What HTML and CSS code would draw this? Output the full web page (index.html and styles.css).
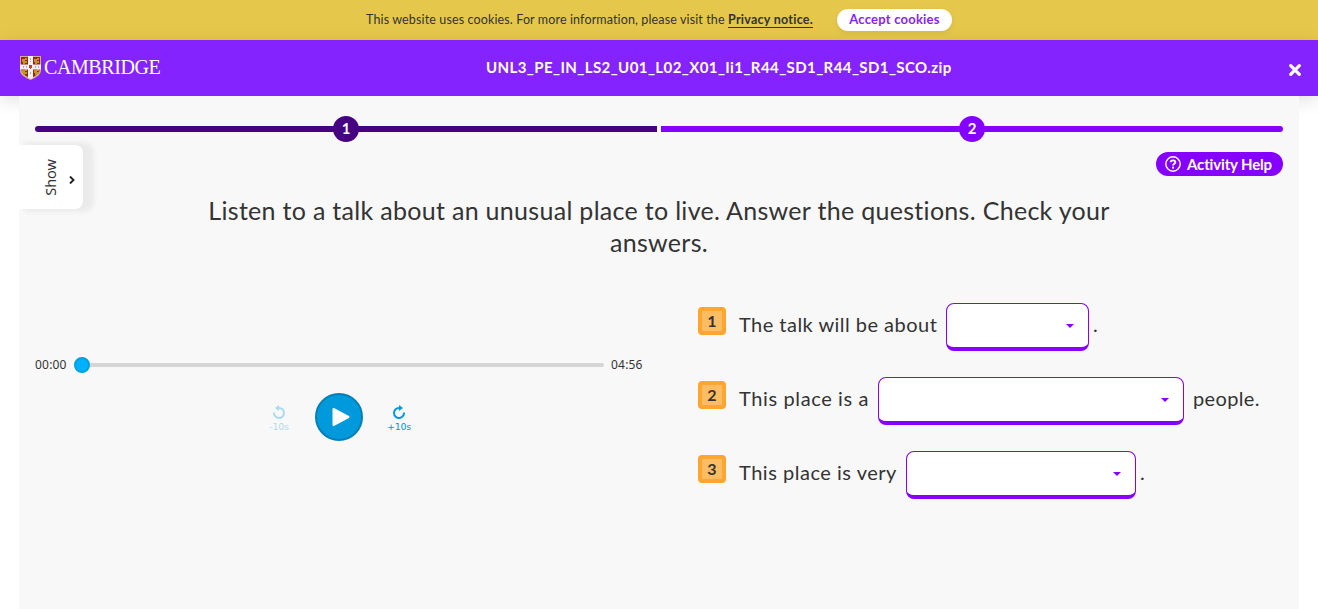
FILE: index.html
```html
<!DOCTYPE html>
<html lang="en">
<head>
<meta charset="utf-8">
<title>Cambridge activity</title>
<link rel="stylesheet" href="styles.css">
</head>
<body>
<div class="cookies">
  <p class="cookie-text">This website uses cookies. For more information, please visit the</p>
  <a class="privacy">Privacy notice.</a>
  <button class="accept"><span>Accept cookies</span></button>
</div>
<header class="header">
  <div class="brand">
    <svg class="shield" viewBox="0 0 21 24">
      <path d="M0 0H21V14C21 19 17 21 10.500 24C4 21 0 19 0 14Z" fill="#d5aa91"/>
      <path d="M1 1H8V9H1ZM13 1H20V9H13ZM1 13H8V21Q2 18 1 13ZM13 13H20Q19 18 13 21Z" fill="#95251b"/>
      <path d="M2 3H5V2H7V4H5V5H7V7H5V8H3V6H2ZM14 3H17V2H19V4H17V5H19V7H17V8H15V6H14ZM2 14H5V13H7V15H5V16H7V18H5V19H3V17H2ZM14 14H17V13H19V15H17V16H19V18H17V19H15V17H14Z" fill="#c4951e"/>
      <path d="M8 0H13V8.500H21V13.500H13V22L10.500 23L8 22V13.500H0V8.500H8Z" fill="#f4eeee"/>
      <path d="M9 9H12V12H11V13H10V12H9Z" fill="#c43c36"/>
      <path d="M10 2h1v2h-1zM10 5h1v1h-1zM10 16h1v2h-1zM3 10h1v2H3zM6 10h1v2H6zM15 10h1v2h-1zM18 10h1v2h-1z" fill="#aaa"/>
    </svg>
    <span class="brand-name">CAMBRIDGE</span>
  </div>
  <h1 class="title">UNL3_PE_IN_LS2_U01_L02_X01_Ii1_R44_SD1_R44_SD1_SCO.zip</h1>
  <svg class="close" viewBox="0 0 12 12"><path d="M1.700 1.700L10.300 10.300M10.300 1.700L1.700 10.300" stroke="#fff" stroke-width="3.200" stroke-linecap="round"/></svg>
</header>
<main class="page">
  <nav class="steps">
    <div class="step step-current"><span class="step-number">1</span></div>
    <div class="step step-next"><span class="step-number">2</span></div>
  </nav>
  <div class="tools">
    <button class="show"><span class="show-label">Show</span>
      <svg class="chevron" viewBox="0 0 6 8"><path d="M1 .500L4.500 4L1 7.500" fill="none" stroke="#222" stroke-width="1.900"/></svg>
    </button>
    <button class="help">
      <svg class="help-icon" viewBox="0 0 16 16" fill="none" stroke="#fff"><circle cx="8" cy="8" r="7.200" stroke-width="1.400"/><path d="M5.700 6.300C5.700 3.700 10.300 3.700 10.300 6.300C10.300 7.800 8 7.600 8 9.500" stroke-width="1.900"/><circle cx="8" cy="11.700" r="1.100" fill="#fff" stroke="none"/></svg>
      <span class="help-label">Activity Help</span>
    </button>
  </div>
  <h2 class="rubric">Listen to a talk about an unusual place to live. Answer the questions. Check your<br>answers.</h2>
  <div class="content">
    <section class="player">
      <div class="timeline"><span class="time">00:00</span><div class="track"><i class="knob"></i></div><span class="time time-end">04:56</span></div>
      <div class="controls">
        <button class="skip skip-off"><svg viewBox="0 0 14 14"><path d="M2 7.500A5 5 0 1 0 7 3H5" fill="none" stroke="currentColor" stroke-width="2"/><path d="M7 0V6L3 3Z" fill="currentColor"/></svg><span>-10s</span></button>
        <button class="play"><svg viewBox="0 0 18 20"><path d="M1.500 2V18L16.500 10Z" fill="#fff" stroke="#fff" stroke-width="2" stroke-linejoin="round"/></svg></button>
        <button class="skip"><svg viewBox="0 0 14 14"><path d="M12 7.500A5 5 0 1 1 7 3H9" fill="none" stroke="currentColor" stroke-width="2"/><path d="M7 0V6L11 3Z" fill="currentColor"/></svg><span>+10s</span></button>
      </div>
    </section>
    <section class="questions">
      <div class="question"><b class="number">1</b><span class="phrase phrase-about">The talk will be about</span><span class="select select-about"><i class="arrow"></i></span><span class="tail">.</span></div>
      <div class="question"><b class="number">2</b><span class="phrase phrase-people">This place is a</span><span class="select select-people"><i class="arrow"></i></span><span class="tail tail-word">people.</span></div>
      <div class="question"><b class="number">3</b><span class="phrase phrase-very">This place is very</span><span class="select select-very"><i class="arrow"></i></span><span class="tail">.</span></div>
    </section>
  </div>
</main>
</body>
</html>
```
FILE: styles.css
```css
* { box-sizing: border-box; }
body { margin: 0; height: 609px; overflow: hidden; background: #fff; color: #333; font-family: Lato, "Noto Sans", sans-serif; font-variant-ligatures: none; }
button { border: 0; padding: 0; font-family: inherit; }
p, h1, h2 { margin: 0; font-weight: 400; }
svg { display: block; flex: none; }
.cookies { height: 40px; background: #e5c84b; display: flex; align-items: center; padding: 0 0 1px 366px; white-space: nowrap; font-size: 12.500px; line-height: 15px; letter-spacing: .130px; }
.cookie-text { width: 362px; }
.privacy { width: 85px; margin-top: 1px; font-weight: 700; letter-spacing: .260px; border-bottom: 1px solid #333; }
.accept { margin: 1px 0 0 24px; padding-bottom: 2px; width: 115px; height: 22px; border-radius: 11px; background: #fff; color: #8523ff; font-size: 13px; font-weight: 700; letter-spacing: .220px; box-shadow: 0 2px 6px rgba(0,0,0,.08); }
.header { height: 56px; background: #8523ff; color: #fff; display: flex; align-items: center; padding: 0 17px 0 20px; box-shadow: 0 4px 18px rgba(0,0,0,.12); }
.brand { display: flex; align-items: center; width: 466px; }
.shield { width: 21px; height: 24px; }
.brand-name { margin: 0 0 2px 3px; font: 20px/24px "Liberation Serif", serif; letter-spacing: -.400px; white-space: nowrap; }
.title { width: 466px; margin-bottom: 2px; font-size: 15px; font-weight: 700; letter-spacing: .420px; white-space: nowrap; }
.close { width: 12px; height: 12px; margin: 4px 0 0 auto; }
.page { position: relative; margin: 0 19px; height: 513px; padding: 20px 16px 0; background: #f8f8f8; }
.steps { display: grid; grid-template-columns: 622px 622px; gap: 4px; height: 26px; }
.step { height: 6px; margin-top: 10px; display: flex; align-items: center; justify-content: center; }
.step-current { background: #460082; border-radius: 3px 0 0 3px; }
.step-next { background: #8500ff; border-radius: 0 3px 3px 0; }
.step-number { width: 26px; height: 26px; border-radius: 50%; color: #fff; font-size: 15px; font-weight: 700; line-height: 25px; text-align: center; flex: none; }
.step-current .step-number { background: #460082; }
.step-next .step-number { background: #8500ff; }
.tools { display: flex; justify-content: space-between; align-items: flex-start; height: 67px; padding-top: 3px; }
.show { width: 64px; height: 64px; margin-left: -16px; padding: 0 8px 0 22px; display: flex; align-items: center; justify-content: space-between; background: #fff; border-radius: 0 8px 8px 0; box-shadow: 8px 0 5px 3px rgba(0,0,0,.055); color: #333; }
.show-label { writing-mode: vertical-rl; transform: rotate(180deg); font: 14.500px/18px "Noto Sans", sans-serif; }
.chevron { width: 6px; height: 8px; margin-top: 6px; }
.help { width: 127px; height: 24px; margin-top: 7px; padding-left: 9px; display: flex; align-items: center; gap: 6px; border-radius: 12px; background: #8500ff; color: #fff; font-size: 15px; font-weight: 700; letter-spacing: -.150px; white-space: nowrap; }
.help-label { margin-bottom: 1px; }
.help-icon { width: 16px; height: 16px; }
.rubric { margin-top: -15px; font-size: 25px; line-height: 32px; letter-spacing: .300px; text-align: center; white-space: nowrap; }
.content { display: flex; padding-top: 45px; }
.player { width: 608px; padding-top: 54px; }
.timeline { display: flex; align-items: center; height: 16px; font: 12px/16px "Noto Sans", sans-serif; letter-spacing: .200px; }
.time { width: 39px; margin-bottom: 1px; }
.time-end { margin-left: 7px; width: 32px; }
.track { width: 530px; height: 4px; border-radius: 2px; background: #d5d5d5; display: flex; align-items: center; }
.knob { width: 16px; height: 16px; border-radius: 50%; background: #00b1ff; border: 2px solid #00a0df; }
.controls { display: flex; align-items: center; justify-content: center; gap: 24px; margin-top: 20px; }
.skip { width: 24px; display: flex; flex-direction: column; align-items: center; background: none; color: #0099db; font: 9.500px/12px "DejaVu Sans", sans-serif; letter-spacing: -.300px; padding-top: 3px; }
.skip svg { width: 14px; height: 14px; margin-bottom: 2px; }
.skip-off { opacity: .3; }
.play { width: 48px; height: 48px; padding-left: 16px; border-radius: 50%; background: #0099db; border: 2px solid #0080b7; }
.play svg { width: 18px; height: 20px; margin-left: -1px; }
.questions { margin-left: 55px; }
.question { display: flex; height: 74px; font-size: 20px; line-height: 24px; letter-spacing: .470px; white-space: nowrap; }
.number { width: 28px; height: 28px; margin-top: 4px; border: 4px solid #ffa530; border-radius: 4px; background: #ffbd63; font-size: 16px; line-height: 20px; letter-spacing: 0; text-align: center; }
.phrase, .tail { margin-top: 9px; }
.phrase { margin-left: 13px; }
.phrase-about { width: 207px; }
.phrase-people { width: 139px; letter-spacing: .620px; }
.phrase-very { width: 167px; letter-spacing: .520px; }
.select { height: 48px; border: 1px solid #8500ff; border-bottom-width: 4px; border-radius: 8px; background: #fff; display: flex; align-items: center; justify-content: flex-end; padding-right: 14px; }
.select-about { width: 143px; }
.select-people { width: 306px; }
.select-very { width: 230px; }
.arrow { border: 4px solid transparent; border-top-color: #8500ff; border-bottom: 0; margin-top: 1px; }
.tail { margin-left: 4px; }
.tail-word { margin-left: 9px; letter-spacing: .350px; }
```
